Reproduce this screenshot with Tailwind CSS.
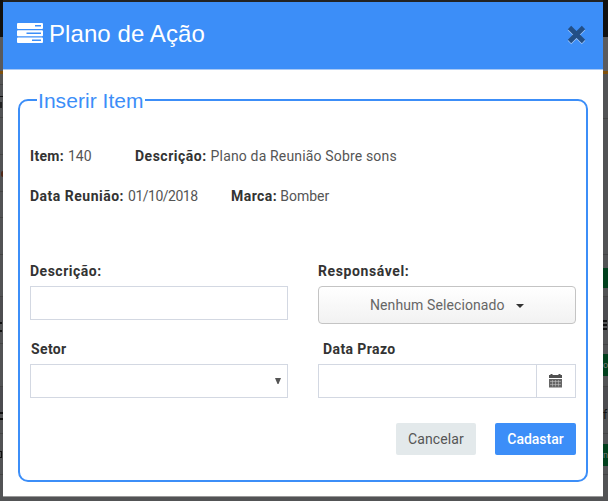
<!DOCTYPE html>
<html lang="pt-BR">
<head>
<meta charset="utf-8">
<title>Plano de Ação</title>
<script src="https://cdn.jsdelivr.net/npm/@tailwindcss/browser@4"></script>
</head>
<body class="w-[608px] h-[501px] overflow-hidden bg-[#525355] font-['Roboto','Liberation_Sans',sans-serif] text-[14px] leading-5 text-[#555]">
<div class="flex h-[501px]">
  <!-- dimmed page, left edge -->
  <div class="w-[3px] shrink-0 overflow-hidden flex flex-col text-black">
    <div class="h-[37px] bg-[#111]"></div>
    <div class="h-[34px] bg-[#59595b]"></div>
    <div class="h-[3px] bg-[#80500a]"></div>
    <div class="h-[10px] bg-[#555]"></div>
    <div class="h-[12px] border-t border-[#444]"></div>
    <div class="h-[1px] bg-[#111]"></div>
    <div class="h-[5px]"></div>
    <div class="h-[6px] w-[2px] bg-[#222]"></div>
    <div class="h-[9px]"></div>
    <div class="h-[37px] border-t border-[#444]"></div>
    <div class="h-[17px] border-t border-[#444]"></div>
    <div class="h-[6px] ml-px rounded-l bg-[#502818]"></div>
    <div class="h-[14px]"></div>
    <div class="h-[26px] border-t border-[#444]"></div>
    <div class="h-[37px] border-t border-[#444]"></div>
    <div class="h-[42px] border-t border-[#444]"></div>
    <div class="h-[26px] border-t border-[#444] bg-[#4e4e51]"></div>
    <div class="h-[10px] w-[2px] border-y-2 border-[#111]"></div>
    <div class="h-[11px]"></div>
    <div class="h-[43px] border-t border-[#444]"></div>
    <div class="h-[26px] border-t border-[#444] bg-[#4c4c50]"></div>
    <div class="h-[8px] border-y-2 border-[#111]"></div>
    <div class="h-[13px]"></div>
    <div class="h-[18px] border-t border-[#444]"></div>
    <div class="h-[7px] w-[2px] border-y border-r border-[#111]"></div>
    <div class="h-[16px]"></div>
    <div class="border-t border-[#444]"></div>
  </div>

  <div class="w-[600px] shrink-0 flex flex-col">
    <div class="h-[2px] bg-[#222]"></div>
    <div class="h-[494px] bg-white flex flex-col">
      <header class="h-[68px] shrink-0 bg-[#3c8ef8] border-b border-[#a9c9f5] flex items-center justify-between pl-[14px] pr-[17px] text-white">
        <div class="flex items-center gap-[6px] pb-[3px]">
          <svg class="w-[26px] h-[20px] -mt-[2px]" viewBox="0 0 26 20" fill="currentColor"><path fill-rule="evenodd" d="M1 0h24q1 0 1 1v4q0 1-1 1H1q-1 0-1-1V1q0-1 1-1zm17 2v1.500h6V2zM1 7.200h24q1 0 1 1v4q0 1-1 1H1q-1 0-1-1v-4q0-1 1-1zm8.500 2.200v1.500H24V9.400zM1 14.400h24q1 0 1 1V19q0 1-1 1H1q-1 0-1-1v-3.600q0-1 1-1zm14 2v1.500h9v-1.500z"/></svg>
          <h1 class="font-['Liberation_Sans',sans-serif] text-[24px] leading-7 tracking-[0.08px] whitespace-nowrap">Plano de Ação</h1>
        </div>
        <button class="w-[19px] h-[20px] mb-[2px]" aria-label="Fechar"><svg viewBox="0 0 19 20" class="w-[19px] h-[20px]"><path d="M2.500 3.500l14 14M16.500 3.500l-14 14" stroke="#9fc6fa" stroke-width="5"/><path d="M2.500 2.500l14 14M16.500 2.500l-14 14" stroke="#234f86" stroke-width="4.800"/></svg></button>
      </header>

      <fieldset class="mx-[15px] mt-[17px] h-[395px] border-2 border-[#3c8ef8] rounded-[10px] px-[10px]">
        <legend class="ml-[7px] px-px h-[26px] font-['Liberation_Sans',sans-serif] text-[21px] leading-7 tracking-[0.05px] text-[#3c8ef8] whitespace-nowrap">Inserir Item</legend>
        <div class="mt-[33px] flex whitespace-nowrap">
          <p class="w-[105px] flex gap-[4px]"><b class="tracking-[0.3px] text-[#333]">Item:</b> <span>140</span></p>
          <p class="flex gap-[4px]"><b class="tracking-[0.5px] text-[#333]">Descrição:</b> <span class="tracking-[0.16px]">Plano da Reunião Sobre sons</span></p>
        </div>
        <div class="mt-[20px] flex whitespace-nowrap">
          <p class="w-[201px] flex gap-[4px]"><b class="tracking-[0.5px] text-[#333]">Data Reunião:</b> <span class="tracking-[-0.5px]">01/10/2018</span></p>
          <p class="flex gap-[3px]"><b class="tracking-[0.45px] text-[#333]">Marca:</b> <span>Bomber</span></p>
        </div>
        <div class="mt-[55px] grid grid-cols-[258px_258px] gap-x-[30px]">
          <div>
            <label class="block font-bold tracking-[0.5px] text-[#333]">Descrição:</label>
            <div class="mt-[5px] h-[34px] border border-[#d3d8e2]"></div>
          </div>
          <div>
            <label class="block font-bold tracking-[0.6px] text-[#333]">Responsável:</label>
            <button class="mt-[5px] w-full h-[38px] border border-[#c4c4c4] rounded-[4px] bg-linear-to-b from-white to-[#f2f2f2] flex items-center pl-[51px] tracking-[0.1px] text-[#666] whitespace-nowrap">Nenhum Selecionado<svg class="ml-[11px] mt-[2px] w-[8px] h-[4px]" viewBox="0 0 8 4"><path d="M0 0h8L4 4z" fill="#333"/></svg></button>
          </div>
          <div class="mt-[15px]">
            <label class="block pl-px font-bold tracking-[0.35px] text-[#333]">Setor</label>
            <div class="mt-[5px] h-[34px] border border-[#d3d8e2] flex items-center justify-end pr-[6px]"><svg class="w-[6px] h-[6px]" viewBox="0 0 6 6"><path d="M0 0h6L3.500 6h-1z" fill="#555"/></svg></div>
          </div>
          <div class="mt-[15px]">
            <label class="block pl-[5px] font-bold tracking-[0.4px] text-[#333]">Data Prazo</label>
            <div class="mt-[5px] h-[34px] border border-[#d3d8e2] flex">
              <div class="w-[218px] border-r border-[#d3d8e2]"></div>
              <div class="flex-1 flex items-center justify-center pr-px"><svg class="w-[13px] h-[14px]" viewBox="0 0 13 14"><path fill="#505050" d="M0 1h1.500V0h2v1h6V0h2v1H13V4H0z"/><path fill="#666" d="M0 5h13v8.500H0z"/><path d="M3.500 6V12.500M6.500 6V12.500M9.500 6V12.500M1 7.500h11M1 10.500h11" stroke="#ccc" stroke-width=".5"/></svg></div>
            </div>
          </div>
        </div>
        <div class="mt-[25px] flex justify-end gap-[19px]">
          <button class="w-[80px] h-[32px] rounded-[2px] bg-[#e3e9eb] tracking-[0.1px] text-[#555]">Cancelar</button>
          <button class="w-[81px] h-[32px] rounded-[2px] bg-[#3c8ef8] text-white font-medium">Cadastar</button>
        </div>
      </fieldset>
    </div>
    <div class="flex-1 border-t border-[#999]"></div>
  </div>

  <!-- dimmed page, right edge -->
  <div class="w-[5px] shrink-0 overflow-hidden flex flex-col text-[12px] leading-3 text-[#111]">
    <div class="h-[37px] bg-[#111]"></div>
    <div class="h-[34px] bg-[#5b5b5d]"></div>
    <div class="h-[3px] bg-[#80500a]"></div>
    <div class="h-[44px]"></div>
    <div class="h-[136px] border-t border-[#444]"></div>
    <div class="h-[14px] border-t border-[#444]"></div>
    <div class="h-[20px] bg-[#00401d]"></div>
    <div class="h-[8px]"></div>
    <div class="h-[24px] border-t border-[#444] bg-[#4c4c50]"></div>
    <div class="h-[10px] w-[4px] border-y-2 border-[#111] flex items-center"><div class="h-[2px] w-[4px] bg-[#111]"></div></div>
    <div class="h-[14px]"></div>
    <div class="h-[10px] border-t border-[#444]"></div>
    <div class="h-[22px] bg-[#00401d] text-[#777] text-[9px] leading-[22px]">o</div>
    <div class="h-[10px]"></div>
    <div class="h-[23px] border-t border-[#444] bg-[#4c4c50]"></div>
    <div class="h-[12px]">f</div>
    <div class="h-[12px]"></div>
    <div class="h-[11px] border-t border-[#444]"></div>
    <div class="h-[22px] bg-[#00401d] text-[#777] text-[9px] leading-[22px]">n</div>
    <div class="h-[8px]"></div>
    <div class="border-t border-[#444]"></div>
  </div>
</div>
</body>
</html>
